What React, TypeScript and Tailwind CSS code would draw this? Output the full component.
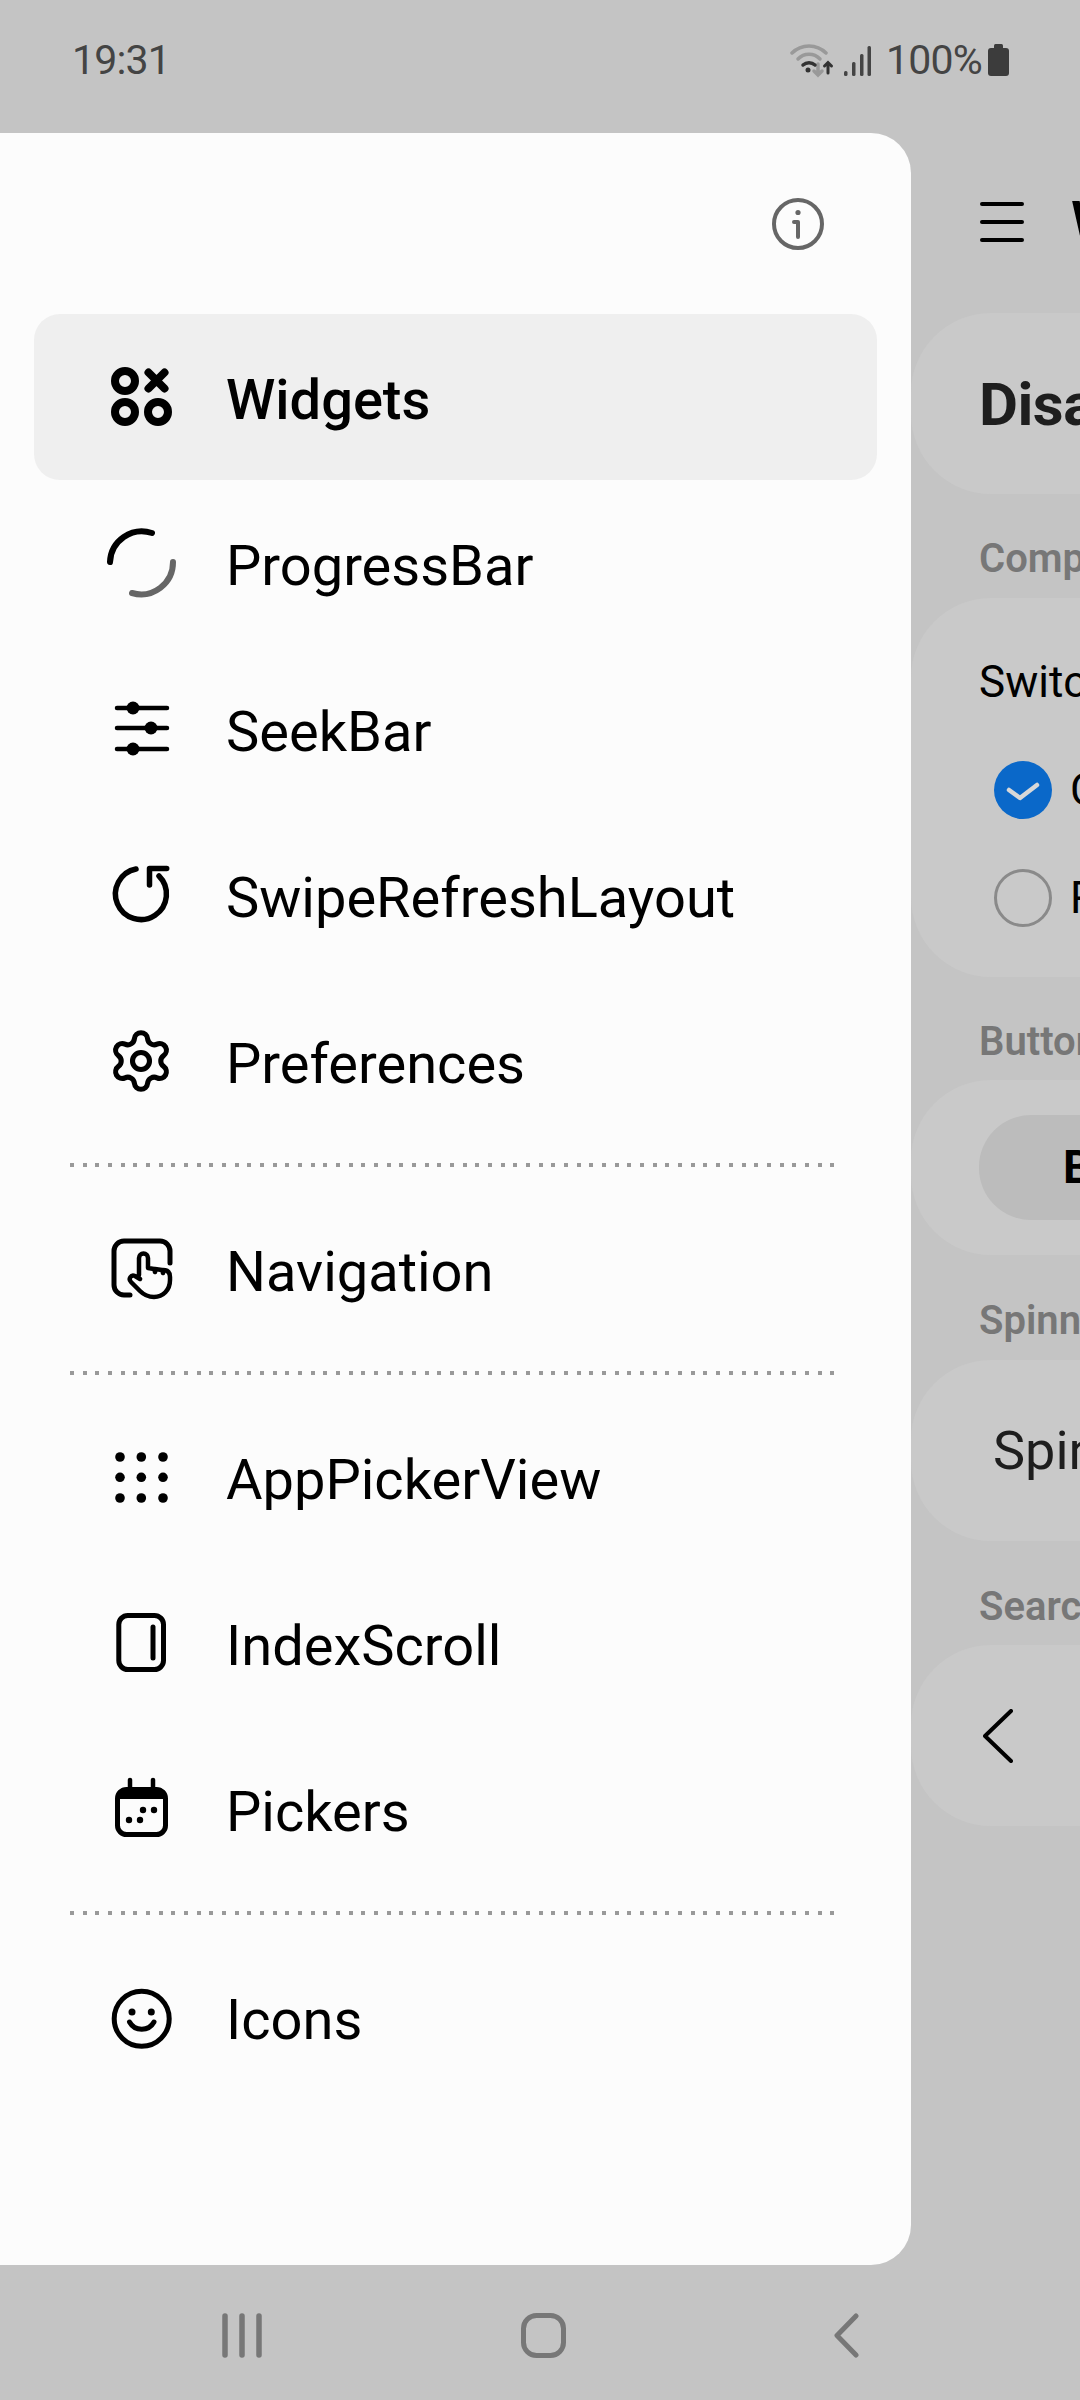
import type { ReactNode } from 'react'
import { Settings } from 'lucide-react'

const font = "font-['Roboto',sans-serif]"

function IconBox({ children }: { children: ReactNode }) {
  return (
    <svg
      viewBox="0 0 80 80"
      className="h-20 w-20 shrink-0 text-black"
      fill="none"
      stroke="currentColor"
      strokeLinecap="round"
      strokeLinejoin="round"
      strokeWidth="5"
    >
      {children}
    </svg>
  )
}

const WidgetsIcon = (
  <IconBox>
    <g strokeWidth="8">
      <circle cx="24" cy="24" r="10" />
      <circle cx="24" cy="55" r="10" />
      <circle cx="57" cy="55" r="10" />
      <path d="M47.5 15.5l16 16M63.5 15.5l-16 16" />
    </g>
  </IconBox>
)

const ProgressIcon = (
  <IconBox>
    <g strokeWidth="6">
      <path d="M9 39A32 32 0 0 1 51 10" />
      <path d="M72 39A32 32 0 0 1 31 70" stroke="#666666" />
    </g>
  </IconBox>
)

const SeekIcon = (
  <IconBox>
    <path d="M16 19H66M16 39H66M16 60H66" strokeWidth="4.5" />
    <g fill="currentColor" stroke="none">
      <circle cx="32" cy="19" r="6.5" />
      <circle cx="50" cy="39" r="6.5" />
      <circle cx="32" cy="60" r="6.5" />
    </g>
  </IconBox>
)

const SwipeIcon = (
  <IconBox>
    <g strokeWidth="5.5">
      <path d="M35 14A25.5 25.5 0 1 0 58 21" />
      <path d="M65.7 13.5H48.5V30" />
    </g>
  </IconBox>
)

const NavigationIcon = (
  <IconBox>
    <path d="M69 34V22a10 10 0 0 0-10-10H23a10 10 0 0 0-10 10V56a10 10 0 0 0 10 10H29" />
    <path
      d="M38 46V29a4.5 4.5 0 0 1 9 0V39l6 1 1 3M54 40l7 1 1 3M62 41c5 0 7 3 7 7v3c0 10-7 17-16 17c-6 0-10-2-14-6l-9-9c-3-3 0-8 4-6l5 3"
      strokeWidth="4.5"
    />
  </IconBox>
)

const GridIcon = (
  <IconBox>
    <g fill="currentColor" stroke="none">
      {[19, 40.3, 62].map((x) =>
        [20, 40.3, 61].map((y) => <circle key={`${x}-${y}`} cx={x} cy={y} r="4.8" />),
      )}
    </g>
  </IconBox>
)

const IndexIcon = (
  <IconBox>
    <rect x="17.8" y="12.5" width="44.7" height="54" rx="9" />
    <path d="M52 24V55" />
  </IconBox>
)

const PickersIcon = (
  <IconBox>
    <rect x="16.5" y="20.5" width="48" height="45" rx="9" />
    <path d="M15 30V28a9 9 0 0 1 9-9H57a9 9 0 0 1 9 9v2z" fill="currentColor" stroke="none" />
    <path d="M29 11V19M52 11V19" strokeWidth="4.5" />
    <g fill="currentColor" stroke="none">
      <circle cx="28" cy="51" r="3.2" />
      <circle cx="39" cy="51" r="3.2" />
      <circle cx="42" cy="41" r="3.2" />
      <circle cx="53" cy="41" r="3.2" />
    </g>
  </IconBox>
)

const SmileIcon = (
  <IconBox>
    <circle cx="40.7" cy="41.7" r="27.5" />
    <path d="M28.5 45a14 14 0 0 0 24.5 0" />
    <g fill="currentColor" stroke="none">
      <circle cx="31" cy="35" r="3.5" />
      <circle cx="50.3" cy="35" r="3.5" />
    </g>
  </IconBox>
)

function Row({ icon, label, active }: { icon: ReactNode; label: string; active?: boolean }) {
  return (
    <div
      className={`flex h-[166px] items-center gap-[45px] rounded-[26px] pl-[67px] text-[56px] text-black ${
        active ? 'bg-[#efefef] font-medium' : ''
      }`}
    >
      {icon}
      <span className="whitespace-nowrap pt-[5px]">{label}</span>
    </div>
  )
}

function Divider() {
  return (
    <div className="flex h-[42px] items-center pl-[36px]">
      <div className="h-[4px] w-[765px] bg-[repeating-linear-gradient(90deg,#999999_0_4px,transparent_4px_12.67px)]" />
    </div>
  )
}

function Drawer() {
  return (
    <div className="flex h-[2132px] w-[911px] shrink-0 flex-col rounded-r-[40px] bg-[#fcfcfc]">
      <div className="flex h-[181px] justify-end pr-[87px] pt-[65px]">
        <svg viewBox="0 0 52 52" className="h-[52px] w-[52px]" fill="none" stroke="#666666" strokeWidth="4" strokeLinecap="round">
          <circle cx="26" cy="26" r="24" />
          <path d="M26 24V39M22 24H26" />
          <circle cx="26" cy="14.5" r="2.6" fill="#666666" stroke="none" />
        </svg>
      </div>
      <div className="ml-[34px] flex w-[843px] flex-col self-start">
        <Row icon={WidgetsIcon} label="Widgets" active />
        <Row icon={ProgressIcon} label="ProgressBar" />
        <Row icon={SeekIcon} label="SeekBar" />
        <Row icon={SwipeIcon} label="SwipeRefreshLayout" />
        <Row
          icon={
            <div className="flex h-20 w-20 shrink-0 items-center justify-center">
              <Settings size={68} strokeWidth={1.8} color="#000000" />
            </div>
          }
          label="Preferences"
        />
        <Divider />
        <Row icon={NavigationIcon} label="Navigation" />
        <Divider />
        <Row icon={GridIcon} label="AppPickerView" />
        <Row icon={IndexIcon} label="IndexScroll" />
        <Row icon={PickersIcon} label="Pickers" />
        <Divider />
        <Row icon={SmileIcon} label="Icons" />
      </div>
    </div>
  )
}

function SectionLabel({ text, className }: { text: string; className: string }) {
  return (
    <div className={`flex shrink-0 items-center pl-[68px] text-[40px] font-semibold text-[#777777] ${className}`}>
      {text}
    </div>
  )
}

function BehindPanel() {
  return (
    <div className="flex min-w-0 flex-1 flex-col overflow-hidden whitespace-nowrap">
      <div className="flex h-[180px] shrink-0 items-start gap-[47px] pl-[69px] pt-[69px]">
        <div className="flex h-10 w-11 shrink-0 flex-col justify-between">
          <div className="h-[4px] rounded-full bg-black" />
          <div className="h-[4px] rounded-full bg-black" />
          <div className="h-[4px] rounded-full bg-black" />
        </div>
        <span className="-mt-[8px] text-[56px] font-semibold leading-none text-black">Widgets</span>
      </div>
      <div className="flex h-[181px] w-[600px] shrink-0 items-center rounded-[80px] bg-[#c9c9c9] pl-[68px] pt-[2px] text-[60px] font-bold tracking-[-0.5px] text-[#1e1e1e]">
        Disabled
      </div>
      <SectionLabel text="Components" className="h-[104px] pt-[26px]" />
      <div className="flex h-[379px] w-[600px] shrink-0 flex-col rounded-[80px] bg-[#c9c9c9] pl-[68px] pt-[59px] text-[44px] text-black">
        <span className="leading-[50px]">Switch</span>
        <div className="ml-[15px] mt-[29px] flex h-[108px] items-center gap-[18px]">
          <div className="flex h-[58px] w-[58px] items-center justify-center rounded-full bg-[#0a68c9]">
            <svg viewBox="0 0 58 58" className="h-[58px] w-[58px]" fill="none" stroke="#d8d8d8" strokeWidth="4.5" strokeLinecap="round" strokeLinejoin="round">
              <path d="M15 29L26 37L43 24" />
            </svg>
          </div>
          <span>CheckBox</span>
        </div>
        <div className="ml-[15px] flex h-[108px] items-center gap-[18px]">
          <div className="h-[58px] w-[58px] rounded-full border-[3px] border-[#8a8a8a]" />
          <span>RadioButton</span>
        </div>
      </div>
      <SectionLabel text="Buttons" className="h-[103px] pt-[26px]" />
      <div className="flex h-[175px] w-[600px] shrink-0 items-center rounded-[80px] bg-[#c9c9c9] pl-[68px]">
        <div className="flex h-[105px] w-[500px] items-center rounded-[52px] bg-[#bcbcbc] pl-[84px] text-[46px] font-bold text-black">
          Button
        </div>
      </div>
      <SectionLabel text="Spinner" className="h-[105px] pt-[26px]" />
      <div className="flex h-[181px] w-[600px] shrink-0 items-center rounded-[80px] bg-[#c9c9c9] pl-[82px] text-[54px] text-[#1e1e1e]">
        Spinner
      </div>
      <SectionLabel text="SearchView" className="h-[104px] pt-[28px]" />
      <div className="flex h-[181px] w-[600px] shrink-0 items-center rounded-[80px] bg-[#c9c9c9] pl-[72px]">
        <svg viewBox="0 0 30 54" className="h-[54px] w-[30px]" fill="none" stroke="#000000" strokeWidth="4" strokeLinecap="round" strokeLinejoin="round">
          <path d="M28 2L2 27L28 52" />
        </svg>
      </div>
    </div>
  )
}

function StatusBar() {
  return (
    <div className="flex h-[133px] shrink-0 items-start pl-[72px] pt-[37px] text-[41px] leading-[46px] tracking-[-0.8px] text-[#444444]">
      <span>19:31</span>
      <svg viewBox="0 0 48 34" className="ml-[620px] mt-[7px] h-[34px] w-[48px] shrink-0" fill="none" strokeLinecap="round" strokeWidth="3.5">
        <g stroke="#999999">
          <path d="M2 9A24 24 0 0 1 36 9" />
          <path d="M8 15A15 15 0 0 1 30 15" />
          <path d="M28 20V31M24 27L28 31L32 27" />
        </g>
        <path d="M13 21A9 9 0 0 1 25 21" stroke="#333333" />
        <circle cx="18" cy="26" r="2.5" fill="#333333" />
        <path d="M38 29V19M34.5 22L38 18.5L41.5 22" stroke="#333333" strokeWidth="3" />
      </svg>
      <svg viewBox="0 0 27 30" className="ml-[6px] mt-[9px] h-[30px] w-[27px] shrink-0" fill="#444444">
        <rect x="0" y="25" width="3.5" height="5" rx="1.5" />
        <rect x="8" y="16" width="3.5" height="14" rx="1.5" />
        <rect x="16" y="8" width="3.5" height="22" rx="1.5" />
        <rect x="23.5" y="0" width="3.5" height="30" rx="1.5" />
      </svg>
      <span className="ml-[15px]">100%</span>
      <svg viewBox="0 0 21 32" className="ml-[6px] mt-[7px] h-[32px] w-[21px] shrink-0" fill="#3c3c3c">
        <rect x="0" y="4" width="21" height="28" rx="3" />
        <rect x="6" y="0" width="9" height="6" rx="1.5" />
      </svg>
    </div>
  )
}

function NavBar() {
  return (
    <div className="flex flex-1 items-start pl-[222px] pt-[48px]">
      <svg viewBox="0 0 40 45" className="h-[45px] w-10 shrink-0" fill="none" stroke="#777777" strokeWidth="5.5" strokeLinecap="round">
        <path d="M3 3V42M20 3V42M37 3V42" />
      </svg>
      <svg viewBox="0 0 45 45" className="ml-[259px] h-[45px] w-[45px] shrink-0" fill="none" stroke="#777777" strokeWidth="5">
        <rect x="2.5" y="2.5" width="40" height="40" rx="13" />
      </svg>
      <svg viewBox="0 0 25 45" className="ml-[268px] h-[45px] w-[25px] shrink-0" fill="none" stroke="#777777" strokeWidth="5" strokeLinecap="round" strokeLinejoin="round">
        <path d="M22 3L3 22.5L22 42" />
      </svg>
    </div>
  )
}

export default function App() {
  return (
    <div className={`flex h-[2400px] w-[1080px] flex-col overflow-hidden bg-[#c4c4c4] ${font}`}>
      <StatusBar />
      <div className="flex h-[2132px] shrink-0">
        <Drawer />
        <BehindPanel />
      </div>
      <NavBar />
    </div>
  )
}
